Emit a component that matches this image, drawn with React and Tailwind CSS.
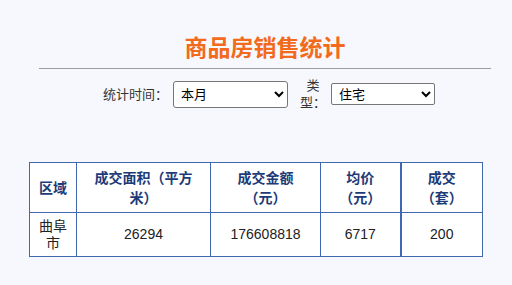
import React from "react";

const font = { fontFamily: '"Liberation Sans", "Noto Sans CJK SC", sans-serif' };

export default function App() {
  return (
    <div
      className="w-[512px] h-[285px] bg-[#f7f8fd] overflow-hidden font-['Liberation_Sans','Noto_Sans_CJK_SC',sans-serif]"
    >
      <div className="ml-[39px] w-[452px] pt-[32px]">
        <h1 className="text-center text-[23px] leading-[32px] font-bold text-[#f26a1c]">
          商品房销售统计
        </h1>
        <div className="mt-[4px] border-t border-[#9c9c9c]"></div>
      </div>

      <div className="mt-[8px] h-[34px] flex items-center pl-[103px] text-[13px] text-[#333]">
        <span className="leading-[17px]">统计时间：</span>
        <select
          defaultValue="本月"
          className="ml-[5px] w-[115px] h-[27px] pl-[3px] bg-white border border-[#767676] rounded-[3px] text-[13px] text-black"
        >
          <option>本月</option>
          <option>本年</option>
        </select>
        <span className="ml-[12px] w-[26px] text-center leading-[17px]">类型：</span>
        <select
          defaultValue="住宅"
          className="ml-[5px] w-[104px] h-[22px] pl-[3px] bg-white border border-[#767676] rounded-[2px] text-[13px] text-black"
        >
          <option>住宅</option>
          <option>商业</option>
        </select>
      </div>

      <table className="mt-[51px] ml-[29px] w-[453px] border-collapse bg-white table-fixed">
        <colgroup>
          <col className="w-[47px]" />
          <col className="w-[134px]" />
          <col className="w-[110px]" />
          <col className="w-[80px]" />
          <col className="w-[82px]" />
        </colgroup>
        <thead>
          <tr className="h-[50px]">
            <th className="border border-[#3f68b1] text-[14px] leading-[20px] font-bold text-[#1d3b78] text-center align-middle">
              区域
            </th>
            <th className="border border-[#3f68b1] text-[14px] leading-[20px] font-bold text-[#1d3b78] text-center align-middle">
              成交面积（平方<br />米）
            </th>
            <th className="border border-[#3f68b1] text-[14px] leading-[20px] font-bold text-[#1d3b78] text-center align-middle">
              成交金额<br />（元）
            </th>
            <th className="border border-[#3f68b1] border-r-2 text-[14px] leading-[20px] font-bold text-[#1d3b78] text-center align-middle">
              均价<br />（元）
            </th>
            <th className="border border-[#3f68b1] text-[14px] leading-[20px] font-bold text-[#1d3b78] text-center align-middle">
              成交<br />（套）
            </th>
          </tr>
        </thead>
        <tbody>
          <tr className="h-[44px]">
            <td className="border border-[#3f68b1] text-[14px] leading-[17px] text-[#222] text-center align-middle">
              曲阜<br />市
            </td>
            <td className="border border-[#3f68b1] text-[14px] text-[#222] text-center align-middle">
              26294
            </td>
            <td className="border border-[#3f68b1] text-[14px] text-[#222] text-center align-middle">
              176608818
            </td>
            <td className="border border-[#3f68b1] border-r-2 text-[14px] text-[#222] text-center align-middle">
              6717
            </td>
            <td className="border border-[#3f68b1] text-[14px] text-[#222] text-center align-middle">
              200
            </td>
          </tr>
        </tbody>
      </table>
    </div>
  );
}
